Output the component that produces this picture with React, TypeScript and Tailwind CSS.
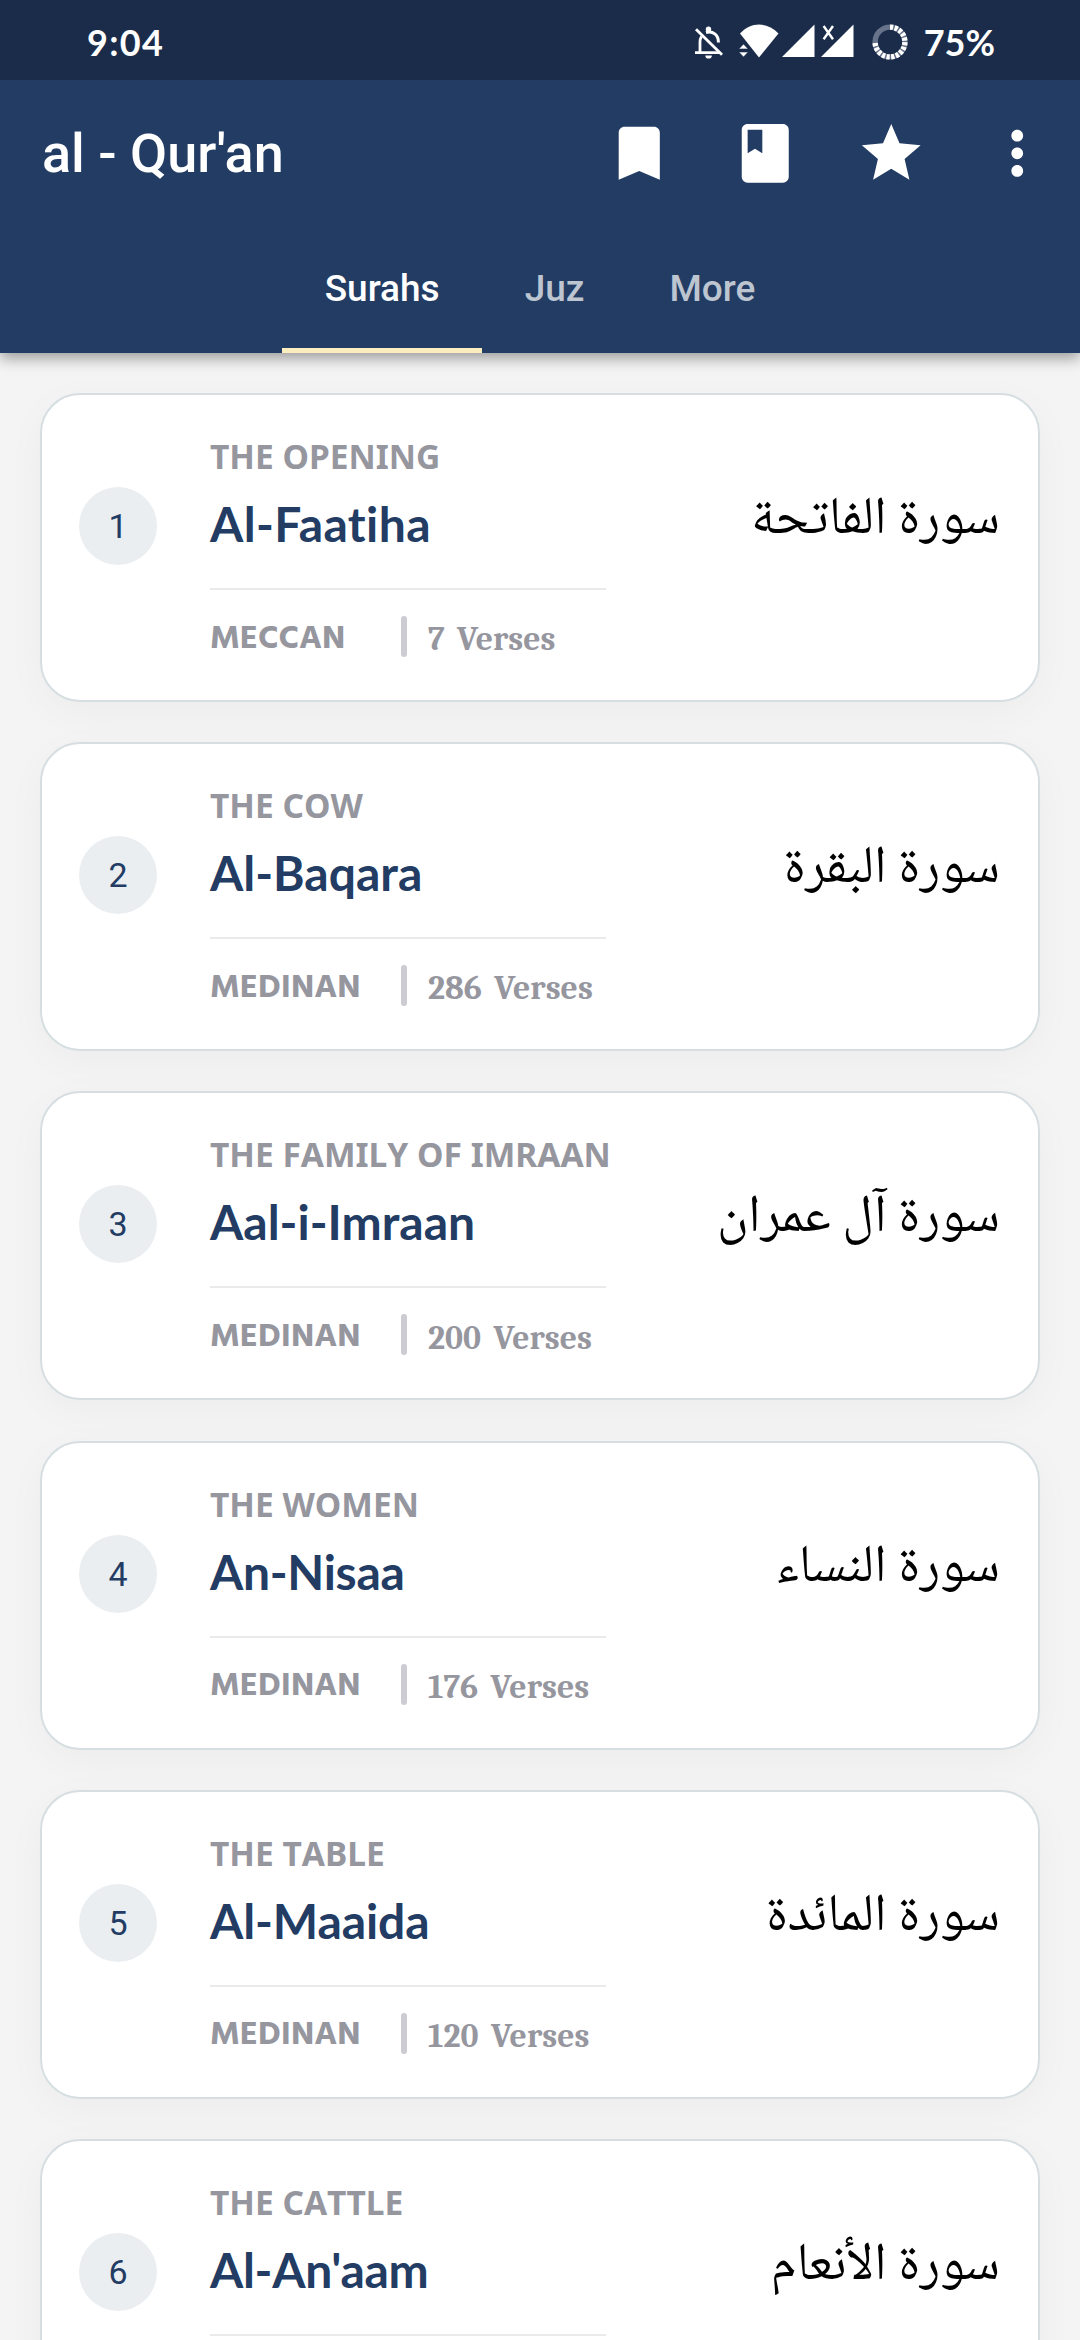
import { MdBookmark, MdClass, MdStar, MdMoreVert } from "react-icons/md";

type Surah = { id: number; meaning: string; name: string; place: string; verses: number; arabic: string; tracking: string };

const surahs: Surah[] = [
  { id: 1, meaning: "THE OPENING", name: "Al-Faatiha", place: "MECCAN", verses: 7, arabic: "سورة الفاتحة", tracking: "tracking-[0.4px]" },
  { id: 2, meaning: "THE COW", name: "Al-Baqara", place: "MEDINAN", verses: 286, arabic: "سورة البقرة", tracking: "tracking-normal" },
  { id: 3, meaning: "THE FAMILY OF IMRAAN", name: "Aal-i-Imraan", place: "MEDINAN", verses: 200, arabic: "سورة آل عمران", tracking: "tracking-normal" },
  { id: 4, meaning: "THE WOMEN", name: "An-Nisaa", place: "MEDINAN", verses: 176, arabic: "سورة النساء", tracking: "tracking-[-0.3px]" },
  { id: 5, meaning: "THE TABLE", name: "Al-Maaida", place: "MEDINAN", verses: 120, arabic: "سورة المائدة", tracking: "tracking-[-0.1px]" },
  { id: 6, meaning: "THE CATTLE", name: "Al-An'aam", place: "MECCAN", verses: 165, arabic: "سورة الأنعام", tracking: "tracking-[-0.3px]" },
];

function BellOff() {
  return (
    <svg width="30" height="34" viewBox="0 0 30 34" fill="none" stroke="#fff">
      <path d="M7.5 10.5C6.4 12.3 6 14 6 16v10M1 26.600h25" strokeWidth="2.800" />
      <path d="M12 6.600c7-2 12.400 2.400 12.400 9.400v.5" strokeWidth="3" />
      <circle cx="14.500" cy="3.200" r="2.700" fill="#fff" stroke="none" />
      <path d="M11.300 29.500h6.600a3.300 3.100 0 0 1-6.600 0z" fill="#fff" stroke="none" />
      <path d="M2 3.200l26 25.600" strokeWidth="2.800" />
    </svg>
  );
}

function Wifi() {
  return (
    <svg width="40" height="34" viewBox="0 0 40 34" fill="#fff">
      <path d="M1 9.500C12-2.500 28-2.500 39.500 9.500L20 33.500z" />
      <path d="M4.500 20l4.700 5H-.2zM-.2 28h9.400l-4.700 5z" stroke="#1a2c49" strokeWidth=".6" />
    </svg>
  );
}

function Signal({ crossed = false }: { crossed?: boolean }) {
  return (
    <svg width="33" height="34" viewBox="0 0 33 34" fill="#fff">
      <path d="M32.500.500V33H0z" />
      {crossed && <path d="M2.600 2l9.400 13.200M12 2L2.600 15.200" stroke="#fff" strokeWidth="2.400" />}
    </svg>
  );
}

function BatteryRing() {
  return (
    <svg width="36" height="36" viewBox="0 0 36 36" fill="none" strokeWidth="5.400">
      <circle cx="18" cy="18" r="14.900" stroke="#66738a" />
      <path d="M18 3.100A14.900 14.900 0 1 1 3.100 18" stroke="#fff" strokeDasharray="3.200 1.480" />
    </svg>
  );
}

function StatusBar() {
  return (
    <div className="flex h-20 items-center bg-[#1a2c49] pl-[87px] pr-[85px] font-['Lato',sans-serif] text-[36px] font-bold leading-none text-white">
      <span className="mt-1 tracking-[1.3px]">9:04</span>
      <div className="ml-auto flex items-center">
        <div className="mt-[5px]"><BellOff /></div>
        <div className="ml-[15px] mt-0.5 flex items-center">
          <Wifi />
          <div className="ml-[3px]"><Signal /></div>
          <div className="ml-[6px]"><Signal crossed /></div>
        </div>
        <div className="ml-[18px] mt-[3px]"><BatteryRing /></div>
        <span className="ml-4 mt-1">75%</span>
      </div>
    </div>
  );
}

function Header() {
  return (
    <header className="relative z-10 shrink-0 bg-[#233c64] text-white shadow-[0_5px_14px_rgba(0,0,0,0.38)]">
      <StatusBar />
      <div className="flex h-[147px] items-center pl-[42px] font-['Roboto',sans-serif]">
        <h1 className="text-[54px] font-medium leading-none">al - Qur'an</h1>
        <nav className="ml-auto flex">
          {[MdBookmark, MdClass, MdStar, MdMoreVert].map((Icon, i) => (
            <button key={i} className="flex w-[126px] justify-center">
              <Icon size={70.500} />
            </button>
          ))}
        </nav>
      </div>
      <div className="flex h-[126px] justify-center font-['Roboto',sans-serif] text-[37px] font-medium leading-none">
        <div className="border-b-[5px] border-[#fcedbf] px-[42.500px] pt-[43px]">Surahs</div>
        <div className="px-[42.500px] pt-[43px] text-[#bdc5d0]">Juz</div>
        <div className="px-[42.500px] pt-[43px] text-[#bdc5d0]">More</div>
      </div>
    </header>
  );
}

function SurahCard({ s }: { s: Surah }) {
  return (
    <article className="flex h-[309px] shrink-0 rounded-[40px] border-2 border-[#d6dee1] bg-white pl-[37px] pr-[38px] shadow-[0_10px_40px_rgba(0,0,0,0.035)]">
      <div className="mt-[92px] flex size-[78px] items-center justify-center rounded-full bg-[#eaeef1] font-['Roboto',sans-serif] text-[34px] leading-none text-[#233c64]">
        {s.id}
      </div>
      <div className="ml-[53px] w-[396px] whitespace-nowrap pt-[41px] text-[#96969f]">
        <p className="font-['Noto_Sans',sans-serif] text-[33.500px] font-bold leading-[40px] [font-kerning:none]">{s.meaning}</p>
        <h2 className={`mt-[18px] font-['Lato',sans-serif] text-[48px] font-bold leading-[60px] text-[#233c64] [font-variant-ligatures:none] ${s.tracking}`}>{s.name}</h2>
        <div className="mt-[34px] h-0.5 bg-[#e9eaec]" />
        <div className="mt-[26px] flex h-[41px] items-center">
          <span className="mt-[5px] w-[191px] font-['Hind','Lato',sans-serif] text-[33.400px] font-bold leading-[41px]">{s.place}</span>
          <span className="h-[41px] w-1.5 rounded-full bg-[#ccccd2]" />
          <span className="ml-[21px] mt-[7px] font-['Caladea','Cambria',serif] text-[33.700px] font-bold leading-none [word-spacing:5px]">{s.verses} Verses</span>
        </div>
      </div>
      <p dir="rtl" className="ml-auto mt-[87px] whitespace-nowrap font-['Noto_Naskh_Arabic'] text-[53px] leading-[80px] text-black">{s.arabic}</p>
    </article>
  );
}

export default function App() {
  return (
    <div className="flex h-[2340px] w-[1080px] flex-col overflow-hidden bg-[#f4f4f4]">
      <Header />
      <main className="flex min-h-0 flex-1 flex-col gap-[40.200px] overflow-hidden px-10 pt-10">
        {surahs.map((s) => (
          <SurahCard key={s.id} s={s} />
        ))}
      </main>
    </div>
  );
}
